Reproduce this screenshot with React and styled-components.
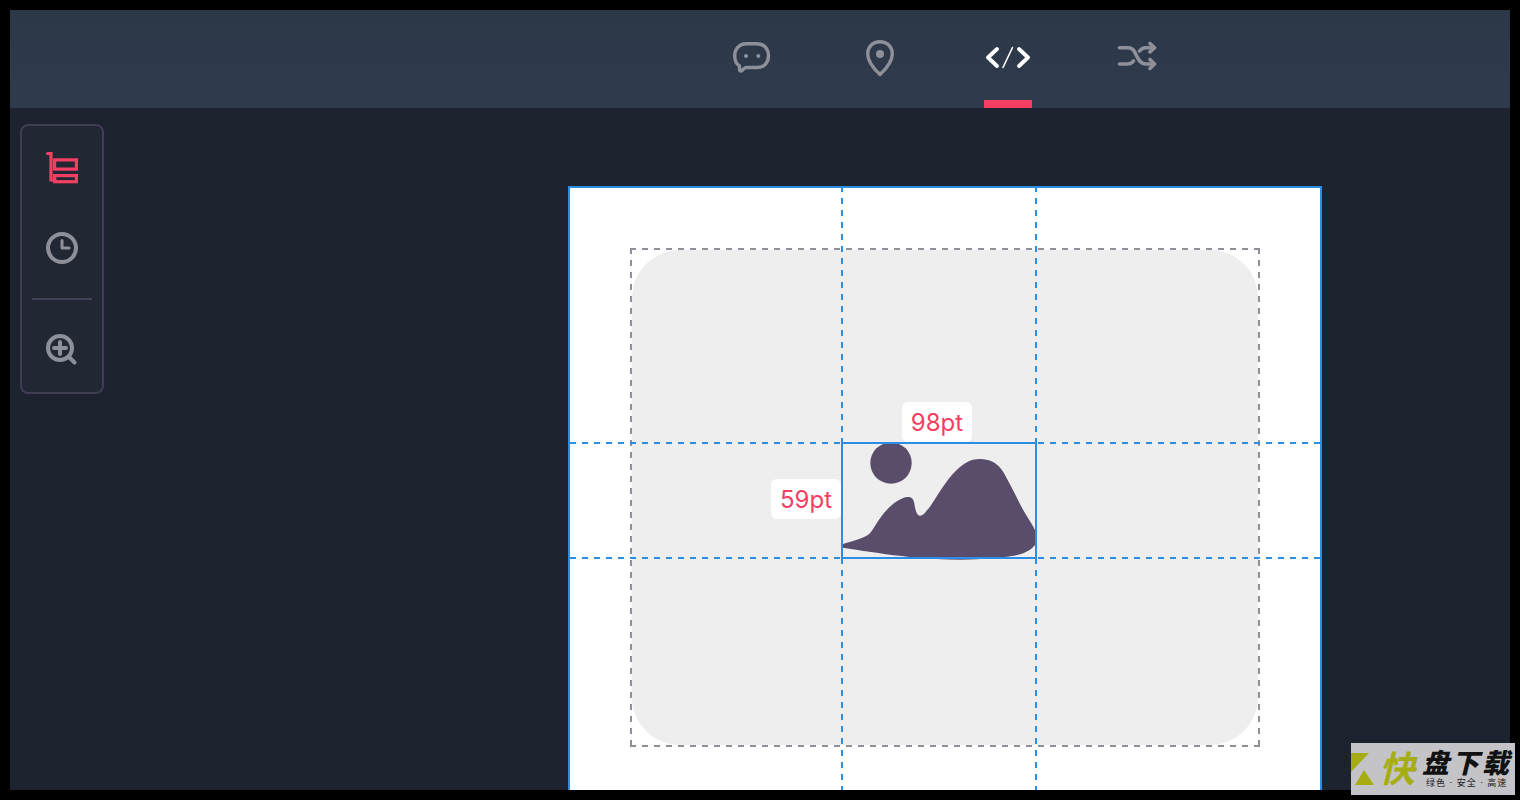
import styled, { createGlobalStyle } from "styled-components";
import { Fragment } from "react";

const GlobalStyle = createGlobalStyle`
  html, body {
    margin: 0;
    padding: 0;
    background: #000;
    overflow: hidden;
    font-family: "Inter", "Noto Sans CJK SC", sans-serif;
  }
`;

const Frame = styled.div`
  position: relative;
  box-sizing: border-box;
  width: 1520px;
  height: 800px;
  padding: 10px;
  background: #000;
  overflow: hidden;
`;

const Screen = styled.div`
  display: flex;
  flex-direction: column;
  height: 100%;
  background: #1c222e;
  overflow: hidden;
`;

const Header = styled.header`
  flex-shrink: 0;
  display: flex;
  height: 98px;
  padding-left: 678px;
  background: linear-gradient(180deg, #2c3848 0%, #2f3b4c 100%);
`;

const Tab = styled.div`
  position: relative;
  display: flex;
  align-items: flex-start;
  justify-content: center;
  width: 128px;
  padding-top: 29px;
  color: ${(props) => (props.$active ? "#ffffff" : "#8e9099")};

  &::after {
    content: "";
    display: ${(props) => (props.$active ? "block" : "none")};
    position: absolute;
    left: 40px;
    bottom: 0;
    width: 48px;
    height: 8px;
    background: #f43f62;
  }
`;

const Workspace = styled.div`
  flex: 1;
  display: flex;
  align-items: flex-start;
  padding: 16px 0 0 10px;
  min-height: 0;
`;

const ToolPanel = styled.aside`
  flex-shrink: 0;
  box-sizing: border-box;
  display: flex;
  flex-direction: column;
  align-items: center;
  width: 84px;
  height: 270px;
  border: 2px solid #3f3c54;
  border-radius: 8px;
  background: #212733;
`;

const Tool = styled.div`
  box-sizing: border-box;
  display: flex;
  align-items: flex-start;
  justify-content: center;
  height: ${(props) => props.$height}px;
  padding-top: ${(props) => props.$top}px;
  color: ${(props) => (props.$active ? "#f43f62" : "#8e9099")};
`;

const ToolDivider = styled.div`
  width: 60px;
  height: 2px;
  flex-shrink: 0;
  margin-top: 12px;
  background: #433f58;
`;

const Artboard = styled.section`
  position: relative;
  flex-shrink: 0;
  box-sizing: border-box;
  width: 754px;
  height: 700px;
  margin: 62px 0 0 464px;
  padding: 60px;
  border: 2px solid #2a8de6;
  border-bottom: none;
  background: #ffffff;
`;

const SafeArea = styled.div`
  box-sizing: border-box;
  width: 630px;
  height: 499px;
  padding: 2px;
  background:
    repeating-linear-gradient(90deg, #8e9099 0 6px, transparent 6px 12px) top / 100% 2px no-repeat,
    repeating-linear-gradient(90deg, #8e9099 0 6px, transparent 6px 12px) bottom / 100% 2px no-repeat,
    repeating-linear-gradient(180deg, #8e9099 0 6px, transparent 6px 12px) left / 2px 100% no-repeat,
    repeating-linear-gradient(180deg, #8e9099 0 6px, transparent 6px 12px) right / 2px 100% no-repeat;
`;

const Placeholder = styled.div`
  height: 100%;
  border-radius: 48px;
  background: #eeeeee;
`;

const GuideV = styled.div`
  position: absolute;
  top: -2px;
  bottom: 0;
  left: ${(props) => props.$left}px;
  width: 2px;
  background: repeating-linear-gradient(180deg, #2a8de6 0 6px, transparent 6px 12px);
`;

const GuideH = styled.div`
  position: absolute;
  left: 0;
  right: 0;
  top: ${(props) => props.$top}px;
  height: 2px;
  background: repeating-linear-gradient(90deg, #2a8de6 0 6px, transparent 6px 12px);
`;

const ImageBox = styled.div`
  position: absolute;
  left: 271px;
  top: 254px;
  width: 196px;
  height: 117px;

  &::after {
    content: "";
    position: absolute;
    inset: 0;
    border: 2px solid #2a8de6;
  }
`;

const SizeLabel = styled.div`
  position: absolute;
  left: ${(props) => props.$left}px;
  top: ${(props) => props.$top}px;
  display: flex;
  align-items: center;
  justify-content: center;
  width: 70px;
  height: 40px;
  border-radius: 6px;
  background: #ffffff;
  color: #f43f62;
  font-size: 24px;
  font-weight: 400;
`;

const Watermark = styled.div`
  position: absolute;
  left: 1351px;
  top: 743px;
  display: flex;
  align-items: center;
  width: 164px;
  height: 52px;
  background: #c4c4c8;
`;

const WatermarkFast = styled.span`
  margin-left: 5px;
  color: #a6ad12;
  font-size: 36px;
  line-height: 40px;
  font-style: italic;
  font-weight: 700;
`;

const WatermarkText = styled.div`
  display: flex;
  flex-direction: column;
  align-items: flex-start;
  margin-left: 7px;
`;

const WatermarkTitle = styled.span`
  color: #111;
  font-size: 27px;
  line-height: 27px;
  font-weight: 900;
  font-style: italic;
  letter-spacing: 3px;
  white-space: nowrap;
`;

const WatermarkSub = styled.span`
  margin-left: 4px;
  color: #222;
  font-size: 9px;
  line-height: 12px;
  letter-spacing: 1px;
  white-space: nowrap;
`;

const ChatIcon = () => (
  <svg width="38" height="38" viewBox="0 0 38 38" fill="none" stroke="currentColor" strokeWidth="3.4" strokeLinejoin="round">
    <path d="M13 4.700h11c7 0 11.500 5 11.500 12s-4.500 11.800-11 11.800H14c-1.500 0-2.500.5-3.500 1.500L9 31.500c-1 1-2.500.5-2.500-1V27C3.500 25 1.700 21 1.700 16.700 1.700 9.700 6.500 4.700 13 4.700z" />
    <circle cx="13" cy="17" r="2" fill="currentColor" stroke="none" />
    <circle cx="25.300" cy="17" r="2" fill="currentColor" stroke="none" />
  </svg>
);

const PinIcon = () => (
  <svg width="32" height="38" viewBox="0 0 32 38" fill="none" stroke="currentColor" strokeWidth="3.400">
    <path d="M16 2.700c7.500 0 12.300 5.500 12.300 12 0 7-5.800 14.800-12.300 20.800C9.500 29.500 3.700 21.700 3.700 14.700c0-6.500 4.800-12 12.300-12z" strokeLinejoin="round" />
    <circle cx="16" cy="15" r="4" fill="currentColor" stroke="none" />
  </svg>
);

const CodeIcon = () => (
  <svg width="46" height="38" viewBox="0 0 46 38" fill="none" stroke="currentColor" strokeLinecap="round" strokeLinejoin="round">
    <path d="M12 10 3 18.500 12 27M34 10l9 8.500L34 27" strokeWidth="3.800" />
    <path d="M27.500 8.500 18 28.500" strokeWidth="1.600" />
  </svg>
);

const ShuffleIcon = () => (
  <svg width="42" height="38" viewBox="0 0 42 38" fill="none" stroke="currentColor" strokeWidth="3.600" strokeLinecap="round" strokeLinejoin="round">
    <path d="M4.500 8.700h8c6 0 7 4 9 8s4 8.300 9 8.300h9M4.500 25h8c3 0 4.500-1 6-3M24.500 12c1.500-2 3-3.300 6-3.300h9" />
    <path d="M35 4.500l4.500 4.200-4.500 4.200M35 20.500l4.500 4.500-4.500 4.500" />
  </svg>
);

const LayersIcon = () => (
  <svg width="34" height="34" viewBox="0 0 34 34" fill="none" stroke="currentColor" strokeWidth="3.200" strokeLinejoin="miter">
    <path d="M2.500 2.500h3.500V29h4" strokeLinecap="round" />
    <rect x="9.600" y="8.900" width="21.800" height="9.200" />
    <rect x="9.600" y="24.600" width="21.800" height="6.100" />
  </svg>
);

const ClockIcon = () => (
  <svg width="34" height="34" viewBox="0 0 34 34" fill="none" stroke="currentColor" strokeWidth="4" strokeLinecap="round" strokeLinejoin="round">
    <circle cx="17" cy="17" r="14" />
    <path d="M17 9.500V17h7" strokeWidth="3" />
  </svg>
);

const ZoomIcon = () => (
  <svg width="34" height="34" viewBox="0 0 34 34" fill="none" stroke="currentColor" strokeWidth="4" strokeLinecap="round">
    <circle cx="15" cy="17" r="12" />
    <path d="M15 11v12M9 17h12M24.500 26.500l5 5" />
  </svg>
);

const Hills = styled.svg`
  position: absolute;
  left: 0;
  top: 0;
  overflow: visible;
`;

const LandscapeArt = () => (
  <Hills width="196" height="119" viewBox="0 0 196 119">
    <circle cx="50" cy="21" r="20.700" fill="#5a4c6b" />
    <path
      d="M2 102C12 99 24 96 29 91.300 34 85 38 76 45.700 68 52 61 60 56 65.700 55 70 54.500 72 56 73 60 74 65 75 73.700 79 73.700 83 73.700 85 69 89 64.700 97 53 105 38 115.700 28 124 20 131 17 139 17 148 17 156 20 162.300 30 168 40 173 50 179 62 184 72 190 80 194 88L194 103C190 108 184 111 179 112.300 172 114.500 160 116 150 116 135 118 115 118 95 117 70 115.500 50 113 30 110 20 108.500 10 107 2 105.700Z"
      fill="#5a4c6b"
    />
  </Hills>
);

const WatermarkLogo = () => (
  <svg width="23" height="32" viewBox="0 0 23 32">
    <polygon points="0,0 18,0 0,19" fill="#a6ad12" />
    <polygon points="4,32 13,17 23,32" fill="#a6ad12" />
  </svg>
);

const tabs = [
  { key: "chat", icon: <ChatIcon /> },
  { key: "pin", icon: <PinIcon /> },
  { key: "code", icon: <CodeIcon />, active: true },
  { key: "shuffle", icon: <ShuffleIcon /> },
];

export default function App() {
  return (
    <Fragment>
      <GlobalStyle />
      <Frame>
        <Screen>
          <Header>
            {tabs.map((tab) => (
              <Tab key={tab.key} $active={tab.active}>
                {tab.icon}
              </Tab>
            ))}
          </Header>
          <Workspace>
            <ToolPanel>
              <Tool $active $height={84} $top={25}>
                <LayersIcon />
              </Tool>
              <Tool $height={76} $top={21}>
                <ClockIcon />
              </Tool>
              <ToolDivider />
              <Tool $height={90} $top={31}>
                <ZoomIcon />
              </Tool>
            </ToolPanel>
            <Artboard>
              <SafeArea>
                <Placeholder />
              </SafeArea>
              <GuideV $left={271} />
              <GuideV $left={465} />
              <GuideH $top={254} />
              <GuideH $top={369} />
              <ImageBox>
                <LandscapeArt />
              </ImageBox>
              <SizeLabel $left={332} $top={214}>98pt</SizeLabel>
              <SizeLabel $left={201} $top={291}>59pt</SizeLabel>
            </Artboard>
          </Workspace>
        </Screen>
        <Watermark>
          <WatermarkLogo />
          <WatermarkFast>快</WatermarkFast>
          <WatermarkText>
            <WatermarkTitle>盘下载</WatermarkTitle>
            <WatermarkSub>绿色 · 安全 · 高速</WatermarkSub>
          </WatermarkText>
        </Watermark>
      </Frame>
    </Fragment>
  );
}
